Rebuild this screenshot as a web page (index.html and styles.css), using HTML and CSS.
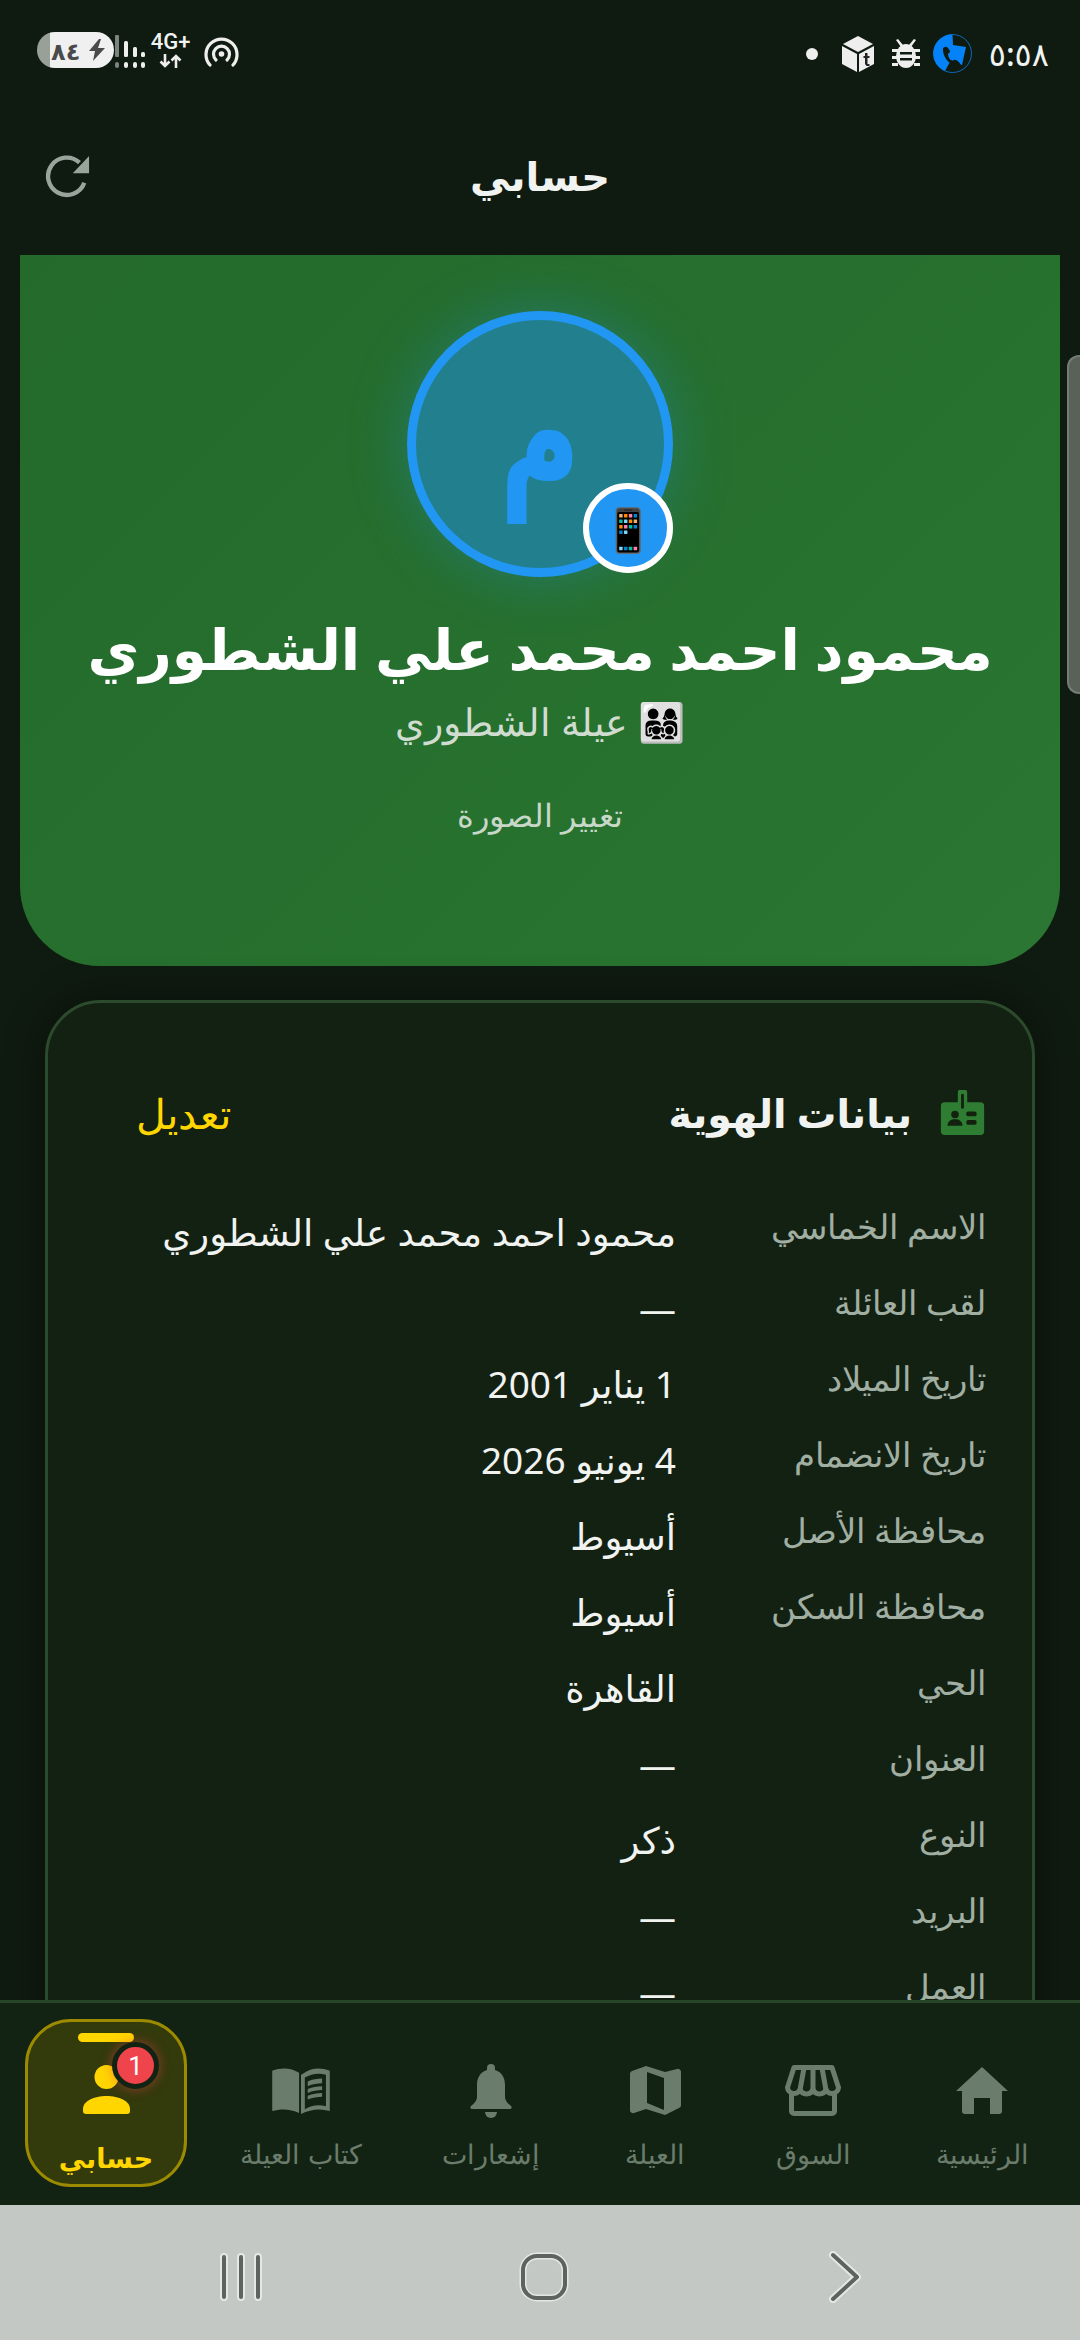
FILE: index.html
```html
<!DOCTYPE html>
<html lang="ar" dir="rtl">
<head>
    <meta charset="UTF-8">
    <meta name="viewport" content="width=device-width, initial-scale=1.0">
    <title>حسابي</title>
    <link rel="stylesheet" href="styles.css">
</head>
<body>
    <div class="phone">
        <div class="status-bar" dir="ltr">
            <div class="status-left">
                <div class="battery"><span class="battery-text">٨٤</span>
                    <svg width="18" height="22" viewBox="0 0 18 22"><path d="M11 0 1 12h6l-2 10 12-13h-7l3-9z" fill="#4a4a4a"/></svg>
                </div>
                <svg class="signal" width="30" height="33" viewBox="0 0 30 33">
                    <rect x="0" y="0" width="4" height="22" rx="1" fill="#7d837e"/><rect x="0" y="27" width="4" height="6" rx="2" fill="#7d837e"/>
                    <rect x="9" y="6" width="4" height="16" rx="1.500" fill="#eee"/><rect x="9" y="27" width="4" height="6" rx="2" fill="#eee"/>
                    <rect x="18" y="12" width="4" height="10" rx="1.500" fill="#eee"/><rect x="18" y="27" width="4" height="6" rx="2" fill="#eee"/>
                    <rect x="26" y="17" width="4" height="5" rx="1.500" fill="#eee"/><rect x="26" y="27" width="4" height="6" rx="2" fill="#eee"/>
                </svg>
                <div class="net">
                    <span class="net-text">4G+</span>
                    <svg width="24" height="14" viewBox="0 0 24 14" fill="none" stroke="#eee" stroke-width="2.600"><path d="M6 0v12M1.500 7.500 6 12l4.500-4.500M17 14V2M12.500 6.500 17 2l4.500 4.500"/></svg>
                </div>
                <svg class="hotspot" width="35" height="30" viewBox="0 0 35 30" fill="none" stroke="#eee" stroke-width="3.200" stroke-linecap="round"><path d="M6 28A15.500 15.500 0 1 1 29 28"/><path d="M12 23a8 8 0 1 1 11 0"/><circle cx="17.500" cy="17" r="2.800" fill="#eee" stroke="none"/></svg>
            </div>
            <div class="status-right">
                <span class="dot"></span>
                <svg class="cube" width="32" height="36" viewBox="0 0 32 36"><path d="M16 0 31 8 16 16 1 8z" fill="#eee"/><path d="M0 10l15 8v18L0 28z" fill="#eee"/><path d="M17 18l15-8v18l-15 8z" fill="#eee"/><path d="M23 17h2.500v3h2v2h-2v6h2v2h-3l-1.500-2v-6h-1.500v-2h1.500z" fill="#222"/></svg>
                <svg class="bug" width="28" height="30" viewBox="0 0 28 30" fill="#eee"><ellipse cx="14" cy="17" rx="10" ry="12"/><path d="M6 0l5 6h6l5-6 2 1-5 7H9L4 1z"/><path d="M0 10h6v3H0zM22 10h6v3h-6zM0 17h6v3H0zM22 17h6v3h-6zM0 24h6v3H0zM22 24h6v3h-6z"/><path d="M8 13h12v2.500H8zM8 19h12v2.500H8z" fill="#0f1a10"/></svg>
                <svg class="phone-app" width="39" height="39" viewBox="0 0 39 39"><circle cx="19.500" cy="19.500" r="19" fill="#0f1a10" stroke="#0a7fe8" stroke-width="0.800"/><path d="M19.500 .5A19 19 0 0 0 12 37L18 26l11 5 4-18-13-2z" fill="#0682f8"/><path d="M10 14c-1 8 6 17 14 18l3-1c1-2-4-6-6-5l-2 1c-2-1-4-4-4-7l2-2c0-2-3-6-5-5z" fill="#0f1a10"/></svg>
                <span class="clock">٥:٥٨</span>
            </div>
        </div>

        <div class="top-bar">
            <svg class="refresh" width="46" height="46" viewBox="0 0 48 48" fill="none">
                <path d="M41 31A19.500 19.500 0 1 1 36 10" stroke="#98a59d" stroke-width="4.500"/>
                <path d="M46 3v18H29z" fill="#98a59d"/>
            </svg>
            <h1 class="page-title">حسابي</h1>
        </div>

        <div class="content">
            <div class="hero">
                <div class="avatar-wrap">
                    <div class="avatar"><span class="avatar-letter">م</span></div>
                    <div class="avatar-badge">📱</div>
                </div>
                <h2 class="hero-name">محمود احمد محمد علي الشطوري</h2>
                <div class="hero-family">👨‍👩‍👧‍👦 عيلة الشطوري</div>
                <div class="hero-change">تغيير الصورة</div>
            </div>

            <div class="card">
                <div class="card-head">
                    <div class="card-title">
                        <svg width="47" height="47" viewBox="0 0 50 50"><path d="M20 3a5 5 0 0 1 10 0v10h14a4 4 0 0 1 4 4v27a4 4 0 0 1-4 4H6a4 4 0 0 1-4-4V17a4 4 0 0 1 4-4h14z" fill="#2e7d32"/><rect x="23.500" y="4" width="3" height="16" rx="1.500" fill="#12220f"/><circle cx="17" cy="26" r="4" fill="#12220f"/><path d="M9 38c0-5 4-7 8-7s8 2 8 7z" fill="#12220f"/><rect x="29" y="23" width="11" height="5" rx="2" fill="#12220f"/><rect x="29" y="32" width="11" height="5" rx="2" fill="#12220f"/></svg>
                        <span>بيانات الهوية</span>
                    </div>
                    <span class="card-edit">تعديل</span>
                </div>
                <div class="rows">
                    <div class="row"><span class="row-label">الاسم الخماسي</span><span class="row-value">محمود احمد محمد علي الشطوري</span></div>
                    <div class="row"><span class="row-label">لقب العائلة</span><span class="row-value">—</span></div>
                    <div class="row"><span class="row-label">تاريخ الميلاد</span><span class="row-value">1 يناير 2001</span></div>
                    <div class="row"><span class="row-label">تاريخ الانضمام</span><span class="row-value">4 يونيو 2026</span></div>
                    <div class="row"><span class="row-label">محافظة الأصل</span><span class="row-value">أسيوط</span></div>
                    <div class="row"><span class="row-label">محافظة السكن</span><span class="row-value">أسيوط</span></div>
                    <div class="row"><span class="row-label">الحي</span><span class="row-value">القاهرة</span></div>
                    <div class="row"><span class="row-label">العنوان</span><span class="row-value">—</span></div>
                    <div class="row"><span class="row-label">النوع</span><span class="row-value">ذكر</span></div>
                    <div class="row"><span class="row-label">البريد</span><span class="row-value">—</span></div>
                    <div class="row"><span class="row-label">العمل</span><span class="row-value">—</span></div>
                </div>
            </div>
        </div>

        <div class="bottom-nav">
            <div class="nav-item">
                <span class="nav-icon"><svg width="52" height="47" viewBox="0 0 52 47" fill="#6a7c6b"><path d="M26 0 52 24h-6v20a3 3 0 0 1-3 3h-9V31H18v16H9a3 3 0 0 1-3-3V24H0z"/></svg></span>
                <span class="nav-label">الرئيسية</span>
            </div>
            <div class="nav-item">
                <span class="nav-icon"><svg width="56" height="51" viewBox="0 0 56 51" fill="none" stroke="#6a7c6b" stroke-width="5"><path d="M6.500 26v20a2.500 2.500 0 0 0 2.500 2.500h38a2.500 2.500 0 0 0 2.500-2.500V26"/><path d="M9 2.500h38l6.500 20a6.500 6.500 0 0 1-12.500 2 7 7 0 0 1-13 0 7 7 0 0 1-13 0 6.500 6.500 0 0 1-12.500-2z" stroke-linejoin="round"/><path d="M19 3l-4 22M28 3v22M37 3l4 22"/></svg></span>
                <span class="nav-label">السوق</span>
            </div>
            <div class="nav-item">
                <span class="nav-icon"><svg width="51" height="50" viewBox="0 0 51 50" fill="#6a7c6b"><path d="M0 8a3 3 0 0 1 2-3l14-5 19 6 12-3a3 3 0 0 1 4 3v33a3 3 0 0 1-2 3l-14 7-19-6-12 4a3 3 0 0 1-4-3z"/><path d="M17 6 34 12V44L17 37z" fill="#132313"/></svg></span>
                <span class="nav-label">العيلة</span>
            </div>
            <div class="nav-item">
                <span class="nav-icon"><svg width="42" height="55" viewBox="0 0 42 55" fill="#6a7c6b"><path d="M17 5a4 4 0 0 1 8 0v2c7 2 10 8 10 15v12c0 3 2 6 6 9 1 1 1 3-1 3H2c-2 0-2-2-1-3 4-3 6-6 6-9V22C7 15 10 9 17 7z"/><path d="M15 49h12a6 6 0 0 1-12 0z"/></svg></span>
                <span class="nav-label">إشعارات</span>
            </div>
            <div class="nav-item">
                <span class="nav-icon"><svg width="62" height="47" viewBox="0 0 62 49"><path d="M1 4C11 0 21 1 29 6v42C21 44 11 43 1 46z" fill="#6a7c6b"/><path d="M33 7C41 1 51 0 61 4v42C51 43 41 44 31 49V8z" fill="#6a7c6b"/><path d="M35 11c7-4 14-5 22-3v33c-8-2-15-1-22 3z" fill="#132313"/><path d="M38 15c5-2 10-3 15-3v5c-5 0-10 1-15 3zM38 23c5-2 10-3 15-3v4c-5 0-10 1-15 3zM38 30c5-2 10-3 15-3v4c-5 0-10 1-15 3z" fill="#6a7c6b"/></svg></span>
                <span class="nav-label">كتاب العيلة</span>
            </div>
            <div class="nav-item nav-active">
                <span class="nav-bar-mark"></span>
                <svg width="49" height="49" viewBox="0 0 49 49" fill="#ffd600"><circle cx="24.500" cy="12" r="12"/><path d="M1 44C1 36 12 31 24.500 31S48 36 48 44v2a3 3 0 0 1-3 3H4a3 3 0 0 1-3-3z"/></svg>
                <span class="nav-badge">1</span>
                <span class="nav-active-label">حسابي</span>
            </div>
        </div>

        <div class="system-nav">
            <svg width="44" height="48" viewBox="0 0 44 48" fill="none" stroke-linecap="round"><g stroke="#e4e8e5" stroke-width="8"><path d="M5 4v40M22 4v40M39 4v40"/></g><g stroke="#5f6360" stroke-width="4"><path d="M5 4v40M22 4v40M39 4v40"/></g></svg>
            <svg class="sys-home" width="50" height="50" viewBox="0 0 50 50" fill="none"><rect x="4" y="4" width="42" height="42" rx="14" stroke="#e4e8e5" stroke-width="7"/><rect x="4" y="4" width="42" height="42" rx="14" stroke="#5f6360" stroke-width="4"/></svg>
            <svg width="34" height="52" viewBox="0 0 34 52" fill="none" stroke-linecap="round" stroke-linejoin="round"><path d="M5 4 29 26 5 48" stroke="#e4e8e5" stroke-width="8"/><path d="M5 4 29 26 5 48" stroke="#5f6360" stroke-width="4"/></svg>
        </div>

        <div class="edge-handle"></div>
    </div>
</body>
</html>
```
FILE: styles.css
```css
* {
    box-sizing: border-box;
}
html, body {
    margin: 0;
    padding: 0;
}
body {
    font-family: "Noto Sans", "DejaVu Sans", sans-serif;
    background-color: #0f1a10;
    color: #f1f3f1;
}
.phone {
    width: 1080px;
    height: 2340px;
    display: flex;
    flex-direction: column;
    overflow: hidden;
    position: relative;
}

/* status bar */
.status-bar {
    height: 100px;
    padding: 32px 31px 0 37px;
    display: flex;
    justify-content: space-between;
    align-items: flex-start;
    flex-shrink: 0;
}
.status-left, .status-right {
    display: flex;
    align-items: center;
}
.battery {
    width: 77px;
    height: 36px;
    border-radius: 18px;
    background: linear-gradient(to right, #98a098 13px, #f0f0f0 13px);
    display: flex;
    align-items: center;
    justify-content: space-between;
    padding: 0 8px 0 14px;
    color: #4a4a4a;
    font-size: 24px;
    font-weight: 700;
}
.signal {
    margin-left: 1px;
    margin-top: 3px;
}
.net {
    width: 41px;
    margin-left: 5px;
    display: flex;
    flex-direction: column;
    align-items: center;
    gap: 3px;
}
.net-text {
    font-family: Roboto, sans-serif;
    font-size: 22px;
    font-weight: 500;
    line-height: 18px;
}
.hotspot {
    margin-left: 13px;
    margin-top: 3px;
}
.dot {
    width: 12px;
    height: 12px;
    border-radius: 50%;
    background-color: #eee;
}
.cube {
    margin-left: 24px;
}
.bug {
    margin-left: 18px;
}
.phone-app {
    margin-left: 13px;
}
.clock {
    font-size: 32px;
    font-weight: 500;
    margin-left: 17px;
}

/* header */
.top-bar {
    height: 155px;
    display: flex;
    align-items: center;
    justify-content: center;
    position: relative;
    flex-shrink: 0;
}
.refresh {
    position: absolute;
    left: 45px;
    top: 53px;
}
.page-title {
    margin: -5px 0 0;
    font-size: 40px;
    font-weight: 700;
}

/* scrolling area */
.content {
    flex: 1;
    overflow: hidden;
}
.hero {
    margin: 0 20px;
    height: 711px;
    background: linear-gradient(135deg, #236a2b, #2a7632);
    border-radius: 0 0 80px 80px;
    display: flex;
    flex-direction: column;
    align-items: center;
    padding-top: 56px;
}
.avatar-wrap {
    position: relative;
    width: 266px;
    height: 266px;
}
.avatar {
    width: 266px;
    height: 266px;
    border-radius: 50%;
    border: 9px solid #2196f3;
    background-color: #22808e;
    box-shadow: 0 0 60px rgba(33, 150, 243, 0.3);
    display: flex;
    align-items: center;
    justify-content: center;
}
.avatar-letter {
    color: #2196f3;
    font-size: 110px;
    font-weight: 700;
    line-height: 1;
    transform: translateY(-18px) scaleY(1.4);
}
.avatar-badge {
    position: absolute;
    right: 0;
    bottom: 4px;
    width: 90px;
    height: 90px;
    border-radius: 50%;
    border: 6px solid #fff;
    background-color: #2196f3;
    font-size: 42px;
    display: flex;
    align-items: center;
    justify-content: center;
}
.hero-name {
    margin: 32px 0 0;
    font-size: 56.500px;
    font-weight: 700;
    line-height: 80px;
    color: #fff;
}
.hero-family {
    font-size: 38px;
    font-weight: 300;
    line-height: 56px;
    color: #d0dccf;
    margin-top: 4px;
}
.hero-change {
    font-size: 32px;
    font-weight: 300;
    line-height: 44px;
    color: #c8d8c8;
    margin-top: 44px;
}

/* info card */
.card {
    margin: 34px 45px 0;
    background-color: #132113;
    border: 3px solid #2c4a2c;
    border-radius: 56px;
    padding: 80px 46px 0 48px;
    height: 1200px;
    box-shadow: 0 0 40px rgba(0, 0, 0, 0.35);
}
.card-head {
    display: flex;
    justify-content: space-between;
    align-items: center;
    height: 60px;
    padding-left: 40px;
}
.card-title {
    display: flex;
    align-items: center;
    gap: 27px;
    font-size: 39.500px;
    font-weight: 700;
}
.card-edit {
    color: #ffd600;
    font-size: 41px;
    font-weight: 300;
}
.rows {
    margin-top: 50px;
}
.row {
    display: flex;
    height: 76px;
    align-items: center;
    font-size: 37px;
}
.row-label {
    width: 310px;
    color: #a1aea2;
    font-size: 33.500px;
    font-weight: 300;
    margin-top: -10px;
}
.row-value {
    color: #f1f3f1;
}

/* bottom nav */
.bottom-nav {
    height: 205px;
    flex-shrink: 0;
    background-color: #132313;
    border-top: 3px solid #264426;
    display: grid;
    grid-template-columns: 170px 168px 148px 180px 200px 176px;
    align-items: start;
    padding: 16px 13px 0 25px;
}
.nav-item {
    display: flex;
    flex-direction: column;
    align-items: center;
    padding-top: 44px;
    color: #6a7c6b;
}
.nav-icon {
    height: 55px;
    display: flex;
    align-items: center;
}
.nav-label {
    font-size: 27px;
    font-weight: 300;
    line-height: 40px;
    margin-top: 16px;
    white-space: nowrap;
}
.nav-active {
    width: 162px;
    height: 168px;
    justify-self: end;
    border: 3px solid #9c8a00;
    border-radius: 46px;
    background-color: #333a0c;
    position: relative;
    color: #ffd600;
    padding-top: 43px;
}
.nav-bar-mark {
    position: absolute;
    top: 11px;
    left: 50%;
    margin-left: -28px;
    width: 56px;
    height: 9px;
    border-radius: 5px;
    background-color: #ffd600;
}
.nav-badge {
    position: absolute;
    top: 20px;
    right: 25px;
    width: 47px;
    height: 47px;
    border-radius: 50%;
    border: 5px solid #132313;
    background-color: #ef444c;
    color: #fff;
    font-family: Roboto, sans-serif;
    font-size: 26px;
    display: flex;
    align-items: center;
    justify-content: center;
    box-shadow: 0 0 12px rgba(239, 68, 76, 0.5);
}
.nav-active-label {
    font-size: 27px;
    font-weight: 700;
    line-height: 40px;
    margin-top: 24px;
}

/* android nav */
.system-nav {
    height: 135px;
    flex-shrink: 0;
    background-color: #c3c8c4;
    display: flex;
    align-items: center;
    justify-content: space-between;
    padding: 8px 218px 0 219px;
    direction: ltr;
}
.sys-home {
    margin-right: 4px;
}

/* edge panel handle, sits over the page */
.edge-handle {
    position: absolute;
    top: 355px;
    right: 0;
    width: 13px;
    height: 339px;
    background-color: #5a6159;
    border: 2px solid #757b75;
    border-right: none;
    border-radius: 12px 0 0 12px;
}
```
